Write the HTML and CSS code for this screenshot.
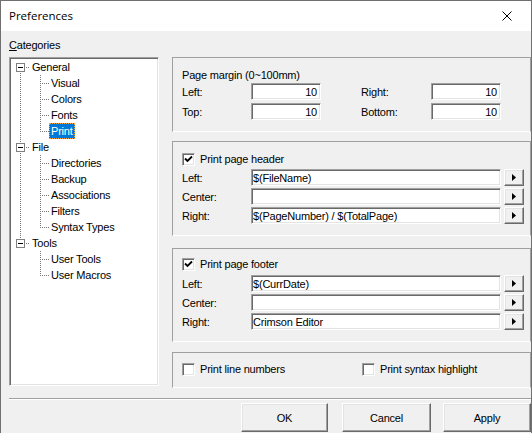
FILE: index.html
```html
<!DOCTYPE html>
<html lang="en">
<head>
  <meta charset="UTF-8">
  <title>Preferences</title>
  <link rel="stylesheet" href="styles.css">
</head>
<body>
  <div class="window">
    <div class="titlebar">
      <span class="title">Preferences</span>
      <svg class="close" width="10" height="10" viewBox="0 0 10 10">
        <path d="M0.5 0.5 L9.5 9.5 M9.5 0.5 L0.5 9.5" stroke="#000" stroke-width="1" fill="none"/>
      </svg>
    </div>

    <div class="main">
      <!-- category tree on the left -->
      <div class="categories">
        <div class="cat-label"><u>C</u>ategories</div>
        <div class="tree">
          <div class="tree-row">
            <span class="indent"></span>
            <span class="expander first"><span class="box"><span class="minus"></span></span></span>
            <span class="hline"></span>
            <span class="node-text">General</span>
          </div>
          <div class="tree-row">
            <span class="spacer"></span><span class="vline"></span><span class="elbow"></span>
            <span class="node-text">Visual</span>
          </div>
          <div class="tree-row">
            <span class="spacer"></span><span class="vline"></span><span class="elbow"></span>
            <span class="node-text">Colors</span>
          </div>
          <div class="tree-row">
            <span class="spacer"></span><span class="vline"></span><span class="elbow"></span>
            <span class="node-text">Fonts</span>
          </div>
          <div class="tree-row">
            <span class="spacer"></span><span class="vline"></span><span class="elbow last"></span>
            <span class="node-text selected">Print</span>
          </div>

          <div class="tree-row">
            <span class="indent"></span>
            <span class="expander"><span class="box"><span class="minus"></span></span></span>
            <span class="hline"></span>
            <span class="node-text">File</span>
          </div>
          <div class="tree-row">
            <span class="spacer"></span><span class="vline"></span><span class="elbow"></span>
            <span class="node-text">Directories</span>
          </div>
          <div class="tree-row">
            <span class="spacer"></span><span class="vline"></span><span class="elbow"></span>
            <span class="node-text">Backup</span>
          </div>
          <div class="tree-row">
            <span class="spacer"></span><span class="vline"></span><span class="elbow"></span>
            <span class="node-text">Associations</span>
          </div>
          <div class="tree-row">
            <span class="spacer"></span><span class="vline"></span><span class="elbow"></span>
            <span class="node-text">Filters</span>
          </div>
          <div class="tree-row">
            <span class="spacer"></span><span class="vline"></span><span class="elbow last"></span>
            <span class="node-text">Syntax Types</span>
          </div>

          <div class="tree-row">
            <span class="indent"></span>
            <span class="expander last"><span class="box"><span class="minus"></span></span></span>
            <span class="hline"></span>
            <span class="node-text">Tools</span>
          </div>
          <div class="tree-row">
            <span class="spacer"></span><span class="vline none"></span><span class="elbow"></span>
            <span class="node-text">User Tools</span>
          </div>
          <div class="tree-row">
            <span class="spacer"></span><span class="vline none"></span><span class="elbow last"></span>
            <span class="node-text">User Macros</span>
          </div>
        </div>
      </div>

      <!-- print options on the right -->
      <div class="options">
        <div class="group margin-group">
          <div class="group-title">Page margin (0~100mm)</div>
          <div class="margin-grid">
            <span>Left:</span>
            <input type="text" class="num-input" value="10">
            <span></span>
            <span>Right:</span>
            <input type="text" class="num-input" value="10">
            <span>Top:</span>
            <input type="text" class="num-input" value="10">
            <span></span>
            <span>Bottom:</span>
            <input type="text" class="num-input" value="10">
          </div>
        </div>

        <div class="group header-group">
          <div class="check"><span class="check-box"><svg width="9" height="9" viewBox="0 0 9 9"><path d="M1 3.5 L3.5 6 L8 1.5" stroke="#000" stroke-width="1.8" fill="none"/></svg></span>Print page header</div>
          <div class="fields">
            <div class="field-row">
              <span class="field-label">Left:</span>
              <input type="text" class="text-input" value="$(FileName)">
              <span class="arrow-btn"><svg width="4" height="7" viewBox="0 0 4 7"><path d="M0 0 L4 3.5 L0 7 Z" fill="#000"/></svg></span>
            </div>
            <div class="field-row">
              <span class="field-label">Center:</span>
              <input type="text" class="text-input" value="">
              <span class="arrow-btn"><svg width="4" height="7" viewBox="0 0 4 7"><path d="M0 0 L4 3.5 L0 7 Z" fill="#000"/></svg></span>
            </div>
            <div class="field-row">
              <span class="field-label">Right:</span>
              <input type="text" class="text-input" value="$(PageNumber) / $(TotalPage)">
              <span class="arrow-btn"><svg width="4" height="7" viewBox="0 0 4 7"><path d="M0 0 L4 3.5 L0 7 Z" fill="#000"/></svg></span>
            </div>
          </div>
        </div>

        <div class="group footer-group">
          <div class="check"><span class="check-box"><svg width="9" height="9" viewBox="0 0 9 9"><path d="M1 3.5 L3.5 6 L8 1.5" stroke="#000" stroke-width="1.8" fill="none"/></svg></span>Print page footer</div>
          <div class="fields">
            <div class="field-row">
              <span class="field-label">Left:</span>
              <input type="text" class="text-input" value="$(CurrDate)">
              <span class="arrow-btn"><svg width="4" height="7" viewBox="0 0 4 7"><path d="M0 0 L4 3.5 L0 7 Z" fill="#000"/></svg></span>
            </div>
            <div class="field-row">
              <span class="field-label">Center:</span>
              <input type="text" class="text-input" value="">
              <span class="arrow-btn"><svg width="4" height="7" viewBox="0 0 4 7"><path d="M0 0 L4 3.5 L0 7 Z" fill="#000"/></svg></span>
            </div>
            <div class="field-row">
              <span class="field-label">Right:</span>
              <input type="text" class="text-input" value="Crimson Editor">
              <span class="arrow-btn"><svg width="4" height="7" viewBox="0 0 4 7"><path d="M0 0 L4 3.5 L0 7 Z" fill="#000"/></svg></span>
            </div>
          </div>
        </div>

        <div class="group extra-group">
          <div class="check"><span class="check-box"></span>Print line numbers</div>
          <div class="check"><span class="check-box"></span>Print syntax highlight</div>
        </div>
      </div>
    </div>

    <div class="separator"></div>

    <div class="buttons">
      <button class="btn ok-btn">OK</button>
      <button class="btn cancel-btn">Cancel</button>
      <button class="btn apply-btn">Apply</button>
    </div>
  </div>
</body>
</html>
```

FILE: styles.css
```css
/* basic styling for the page */
body {
  margin: 0;
  padding: 0;
  font-family: "Liberation Sans", Arial, sans-serif;
  font-size: 11px;
  letter-spacing: -0.2px;
  color: #000000;
  background: #FFFFFF;
}
.window {
  width: 530px;
  height: 432px;
  border: 1px solid #707070;
  border-bottom: none;
  background: #F0F0F0;
  display: flex;
  flex-direction: column;
  overflow: hidden;
}

/* title bar */
.titlebar {
  height: 30px;
  flex-shrink: 0;
  background: #FFFFFF;
  display: flex;
  align-items: center;
  justify-content: space-between;
  padding: 0 19px 0 8px;
}
.title {
  font-family: "Open Sans", "Liberation Sans", sans-serif;
  font-size: 11.5px;
  letter-spacing: 0;
  margin-top: -1px;
}
.close {
  margin-top: -1px;
}

.main {
  display: flex;
  padding: 7px 0 0 8px;
}

/* category tree */
.categories {
  width: 150px;
}
.cat-label {
  height: 14px;
  line-height: 14px;
}
.tree {
  margin-top: 5px;
  height: 329px;
  box-sizing: border-box;
  background: #FFFFFF;
  border: 1px solid;
  border-color: #A0A0A0 #FFFFFF #FFFFFF #A0A0A0;
  box-shadow: inset 1px 1px #696969, inset -1px -1px #E3E3E3;
  padding: 1px 0 0 1px;
}
.tree-row {
  display: flex;
  height: 16px;
}
.indent {
  width: 5px;
}
.expander {
  width: 9px;
  background: repeating-linear-gradient(to bottom, #787878 0 1px, transparent 1px 2px) 4px 0 / 1px 100% no-repeat;
}
.expander.first {
  background-position: 4px 100%;
  background-size: 1px 50%;
}
.expander.last {
  background-size: 1px 50%;
}
.box {
  display: block;
  width: 9px;
  height: 9px;
  box-sizing: border-box;
  margin-top: 4px;
  border: 1px solid #808080;
  background: #FFFFFF;
  padding: 3px 1px 0 1px;
}
.minus {
  display: block;
  height: 1px;
  background: #000000;
}
.hline {
  width: 5px;
  background: repeating-linear-gradient(to right, #787878 0 1px, transparent 1px 2px) 1px 8px / 100% 1px no-repeat;
}
.spacer {
  width: 9px;
}
.vline {
  width: 20px;
  background: repeating-linear-gradient(to bottom, #787878 0 1px, transparent 1px 2px) 0 0 / 1px 100% no-repeat;
}
.vline.none {
  background: none;
}
.elbow {
  width: 9px;
  background:
    repeating-linear-gradient(to bottom, #787878 0 1px, transparent 1px 2px) 0 0 / 1px 100% no-repeat,
    repeating-linear-gradient(to right, #787878 0 1px, transparent 1px 2px) 0 8px / 100% 1px no-repeat;
}
.elbow.last {
  background:
    repeating-linear-gradient(to bottom, #787878 0 1px, transparent 1px 2px) 0 0 / 1px 9px no-repeat,
    repeating-linear-gradient(to right, #787878 0 1px, transparent 1px 2px) 0 8px / 100% 1px no-repeat;
}
.node-text {
  box-sizing: border-box;
  height: 16px;
  line-height: 14px;
  padding: 0 1px;
  border: 1px solid transparent;
  white-space: nowrap;
}
.node-text.selected {
  background: #0078D7;
  color: #FFFFFF;
  border: 1px dotted #F7A541;
}

/* option groups */
.options {
  width: 359px;
  margin-left: 13px;
  padding-top: 19px;
}
.group {
  border: 1px solid #A0A0A0;
  border-bottom-color: #FFFFFF;
  padding-left: 9px;
}
.margin-group {
  padding-top: 10px;
  padding-bottom: 11px;
}
.header-group {
  margin-top: 9px;
  padding-top: 10px;
  padding-bottom: 11px;
}
.footer-group {
  margin-top: 12px;
  padding-top: 8px;
  padding-bottom: 11px;
}
.footer-group .fields {
  margin-top: 4px;
}
.extra-group {
  margin-top: 10px;
  padding-top: 9px;
  padding-bottom: 11px;
  display: grid;
  grid-template-columns: 180px auto;
}
.group-title {
  height: 14px;
  line-height: 14px;
  margin-bottom: 1px;
}
.margin-grid {
  display: grid;
  grid-template-columns: 69px 70px 40px 70px 70px;
  grid-auto-rows: 17px;
  row-gap: 3px;
  align-items: center;
}

/* sunken edit boxes */
input[type="text"] {
  box-sizing: border-box;
  height: 17px;
  margin: 0;
  font-family: inherit;
  font-size: 11px;
  letter-spacing: -0.2px;
  color: #000000;
  background: #FFFFFF;
  border: 1px solid;
  border-color: #A0A0A0 #FFFFFF #FFFFFF #A0A0A0;
  box-shadow: inset 1px 1px #696969, inset -1px -1px #E3E3E3;
  outline: none;
}
.num-input {
  width: 70px;
  text-align: right;
  padding: 0 3px 0 2px;
}
.text-input {
  width: 250px;
  padding: 0 2px 0 1px;
}
.fields {
  display: flex;
  flex-direction: column;
  gap: 2px;
  margin-top: 3px;
}
.field-row {
  display: flex;
  align-items: center;
  height: 17px;
}
.field-label {
  width: 69px;
}

/* little arrow buttons beside the fields */
.arrow-btn {
  box-sizing: border-box;
  width: 20px;
  height: 17px;
  margin-left: 3px;
  display: flex;
  align-items: center;
  justify-content: center;
  background: #F0F0F0;
  border: 1px solid;
  border-color: #FFFFFF #696969 #696969 #FFFFFF;
  box-shadow: inset -1px -1px #A0A0A0, inset 1px 1px #E3E3E3;
}

/* checkboxes */
.check {
  display: flex;
  align-items: center;
  height: 14px;
  white-space: nowrap;
}
.check-box {
  box-sizing: border-box;
  width: 13px;
  height: 13px;
  margin-right: 5px;
  display: flex;
  align-items: center;
  justify-content: center;
  background: #FFFFFF;
  border: 1px solid;
  border-color: #A0A0A0 #FFFFFF #FFFFFF #A0A0A0;
  box-shadow: inset 1px 1px #696969, inset -1px -1px #E3E3E3;
}

/* bottom buttons */
.separator {
  margin: 10px 0 0 8px;
  height: 1px;
  border-top: 1px solid #A0A0A0;
  background: #FFFFFF;
}
.buttons {
  display: flex;
  padding-left: 240px;
  margin-top: 3px;
}
.btn {
  box-sizing: border-box;
  height: 29px;
  padding: 0;
  font-family: inherit;
  font-size: 11px;
  letter-spacing: -0.2px;
  color: #000000;
  background: #F0F0F0;
  border: 1px solid;
  border-color: #FFFFFF #696969 #696969 #FFFFFF;
  box-shadow: inset -1px -1px #A0A0A0, inset 1px 1px #E3E3E3;
}
.ok-btn {
  width: 87px;
}
.cancel-btn {
  width: 89px;
  margin-left: 14px;
}
.apply-btn {
  width: 88px;
  margin-left: 12px;
}
```
